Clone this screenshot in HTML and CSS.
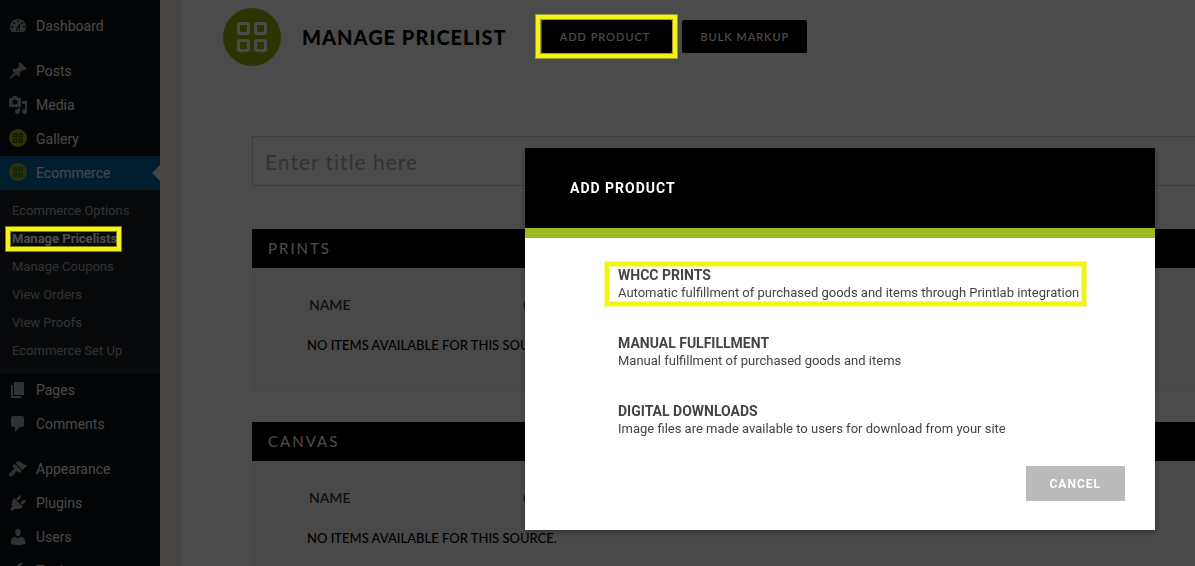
FILE: index.html
```html
<!DOCTYPE html>
<html lang="en">
<head>
    <meta charset="UTF-8">
    <meta name="viewport" content="width=device-width, initial-scale=1.0">
    <title>Manage Pricelist</title>
    <link rel="stylesheet" href="styles.css">
</head>
<body>
    <svg class="symbols" width="0" height="0" aria-hidden="true">
        <symbol id="grid-badge" viewBox="0 0 58 58">
            <circle class="badge-disc" cx="29" cy="29" r="29"/>
            <g fill="none" stroke="currentColor" stroke-width="3">
                <rect x="15.500" y="15.500" width="10" height="10" rx="1.500"/>
                <rect x="32.500" y="15.500" width="10" height="10" rx="1.500"/>
                <rect x="15.500" y="32.500" width="10" height="10" rx="1.500"/>
                <rect x="32.500" y="32.500" width="10" height="10" rx="1.500"/>
            </g>
        </symbol>
        <symbol id="grid-small" viewBox="0 0 18 18">
            <circle class="badge-disc" cx="9" cy="9" r="9"/>
            <g fill="none" stroke="currentColor" stroke-width="1.400">
                <rect x="4.700" y="4.700" width="3.200" height="3.200" rx="1"/>
                <rect x="10.100" y="4.700" width="3.200" height="3.200" rx="1"/>
                <rect x="4.700" y="10.100" width="3.200" height="3.200" rx="1"/>
                <rect x="10.100" y="10.100" width="3.200" height="3.200" rx="1"/>
            </g>
        </symbol>
    </svg>

    <div class="page">
        <nav class="sidebar">
            <ul class="menu">
                <li><a href="#"><svg viewBox="0 0 20 20"><path d="M3.760 16h12.480c1.100-1.370 1.760-3.110 1.760-5 0-4.420-3.580-8-8-8s-8 3.580-8 8c0 1.890.660 3.630 1.760 5zM10 4c.550 0 1 .450 1 1s-.450 1-1 1-1-.450-1-1 .450-1 1-1zM6 6c.550 0 1 .450 1 1s-.450 1-1 1-1-.450-1-1 .450-1 1-1zm8 0c.550 0 1 .450 1 1s-.450 1-1 1-1-.450-1-1 .450-1 1-1zm-5.370 5.550L12 7v6c0 1.100-.900 2-2 2s-2-.900-2-2c0-.570.240-1.080.630-1.450zM4 10c.550 0 1 .450 1 1s-.450 1-1 1-1-.450-1-1 .450-1 1-1zm12 0c.550 0 1 .450 1 1s-.450 1-1 1-1-.450-1-1 .450-1 1-1zm-5 3c0-.550-.450-1-1-1s-1 .450-1 1 .450 1 1 1 1-.450 1-1z"/></svg>Dashboard</a></li>
                <li class="group"><a href="#"><svg viewBox="0 0 20 20"><path d="M10.440 3.020l1.820-1.820 6.360 6.350-1.830 1.820c-1.050-.680-2.480-.570-3.410.360l-.750.750c-.920.930-1.040 2.350-.350 3.410l-1.830 1.820-2.410-2.410-2.800 2.790c-.420.420-3.380 2.710-3.800 2.290s1.860-3.390 2.280-3.810l2.790-2.790L4.100 9.360l1.830-1.820c1.050.690 2.480.570 3.400-.360l.750-.750c.930-.920 1.050-2.350.360-3.410z"/></svg>Posts</a></li>
                <li><a href="#"><svg viewBox="0 0 20 20"><path d="M13 11V4c0-.550-.450-1-1-1h-1.670L9 1H5L3.670 3H2c-.550 0-1 .450-1 1v7c0 .550.450 1 1 1h10c.550 0 1-.450 1-1zM7 4.500c1.380 0 2.500 1.120 2.500 2.500S8.380 9.500 7 9.500 4.500 8.380 4.500 7 5.620 4.500 7 4.500zM14 6h5v10.500c0 1.380-1.120 2.500-2.500 2.500S14 17.880 14 16.500s1.120-2.500 2.500-2.500c.170 0 .340.020.500.050V9h-3V6zm-4 8.050V13h2v3.500c0 1.380-1.120 2.500-2.500 2.500S7 17.880 7 16.500 8.120 14 9.500 14c.170 0 .340.020.500.050z"/></svg>Media</a></li>
                <li><a href="#"><svg class="brand"><use href="#grid-small"/></svg>Gallery</a></li>
                <li class="current"><a href="#"><svg class="brand"><use href="#grid-small"/></svg>Ecommerce</a></li>
            </ul>
            <ul class="submenu">
                <li><a href="#">Ecommerce Options</a></li>
                <li><a class="active highlight" href="#">Manage Pricelists</a></li>
                <li><a href="#">Manage Coupons</a></li>
                <li><a href="#">View Orders</a></li>
                <li><a href="#">View Proofs</a></li>
                <li><a href="#">Ecommerce Set Up</a></li>
            </ul>
            <ul class="menu">
                <li><a href="#"><svg viewBox="0 0 20 20"><path d="M6 15V2h10v13H6zm-1 1h8v2H3V5h2v11z"/></svg>Pages</a></li>
                <li><a href="#"><svg viewBox="0 0 20 20"><path d="M5 2h9c1.100 0 2 .900 2 2v7c0 1.100-.900 2-2 2h-2l-5 5v-5H5c-1.100 0-2-.900-2-2V4c0-1.100.900-2 2-2z"/></svg>Comments</a></li>
                <li class="group"><a href="#"><svg viewBox="0 0 20 20"><path d="M14.480 11.060L7.410 3.990l1.500-1.500c.500-.560 2.300-.470 3.510.320 1.210.800 1.430 1.280 2.910 2.100 1.180.640 2.450 1.260 4.450.850zm-.710.710L6.700 4.700 4.930 6.470c-.390.390-.390 1.020 0 1.410l1.060 1.060c.390.390.390 1.030 0 1.420-.600.600-1.430 1.110-2.210 1.690-.350.260-.700.530-1.010.840C1.430 14.230.400 16.080 1.400 17.070c.990 1 2.840-.030 4.180-1.360.310-.310.580-.660.850-1.020.570-.780 1.080-1.610 1.690-2.210.390-.390 1.020-.390 1.410 0l1.060 1.060c.390.390 1.020.390 1.410 0z"/></svg>Appearance</a></li>
                <li><a href="#"><svg viewBox="0 0 20 20"><path d="M13.110 4.360L9.870 7.600 8 5.730l3.240-3.240c.350-.340 1.050-.200 1.560.320.520.510.660 1.210.310 1.550zm-8 1.770l.910-1.120 9.010 9.010-1.190.840c-.710.710-2.630 1.160-3.820 1.160H6.140L4.900 17.260c-.590.590-1.540.590-2.120 0-.590-.580-.590-1.530 0-2.120l1.240-1.240v-3.880c0-1.130.400-3.190 1.090-3.890zm7.260 3.970l3.240-3.240c.340-.350 1.040-.210 1.550.310.520.510.660 1.210.310 1.550l-3.240 3.250z"/></svg>Plugins</a></li>
                <li><a href="#"><svg viewBox="0 0 20 20"><path d="M10 9.250c-2.270 0-2.730-3.440-2.730-3.440C7 4.020 7.820 2 9.970 2c2.160 0 2.980 2.020 2.710 3.810 0 0-.410 3.440-2.680 3.440zm0 2.570L12.720 10c2.390 0 4.520 2.330 4.520 4.530v2.490s-3.650 1.130-7.240 1.130c-3.650 0-7.240-1.130-7.240-1.130v-2.490c0-2.250 1.940-4.480 4.470-4.480z"/></svg>Users</a></li>
                <li><a href="#"><svg viewBox="0 0 20 20"><path d="M16.680 9.770c-1.340 1.340-3.300 1.670-4.950.990l-5.410 6.520c-.990.990-2.590.990-3.580 0s-.990-2.590 0-3.570l6.520-5.420c-.680-1.650-.350-3.610.990-4.950 1.280-1.280 3.120-1.620 4.720-1.060l-2.890 2.890 2.820 2.820 2.860-2.870c.530 1.580.180 3.390-1.080 4.650z"/></svg>Tools</a></li>
            </ul>
        </nav>

        <main class="content">
            <header class="page-header">
                <svg class="page-icon"><use href="#grid-badge"/></svg>
                <h1>Manage Pricelist</h1>
                <div class="actions">
                    <span class="highlight"><button class="add" type="button">Add Product</button></span>
                    <button type="button">Bulk Markup</button>
                </div>
            </header>

            <form class="pricelist">
                <input class="title-input" type="text" placeholder="Enter title here" aria-label="Pricelist title">

                <section class="panel">
                    <h2>Prints</h2>
                    <table>
                        <thead>
                            <tr><th class="name">Name</th><th>Cost</th></tr>
                        </thead>
                        <tbody>
                            <tr><td colspan="2">No items available for this source.</td></tr>
                        </tbody>
                    </table>
                </section>

                <section class="panel">
                    <h2>Canvas</h2>
                    <table>
                        <thead>
                            <tr><th class="name">Name</th><th>Cost</th></tr>
                        </thead>
                        <tbody>
                            <tr><td colspan="2">No items available for this source.</td></tr>
                        </tbody>
                    </table>
                </section>
            </form>
        </main>
    </div>

    <div class="overlay">
        <div class="modal" role="dialog" aria-labelledby="modal-title">
            <h2 id="modal-title">Add Product</h2>
            <ul class="options">
                <li>
                    <a class="highlight" href="#"><strong>WHCC Prints</strong>Automatic fulfillment of purchased goods and items through Printlab integration</a>
                </li>
                <li>
                    <a href="#"><strong>Manual Fulfillment</strong>Manual fulfillment of purchased goods and items</a>
                </li>
                <li>
                    <a href="#"><strong>Digital Downloads</strong>Image files are made available to users for download from your site</a>
                </li>
            </ul>
            <div class="modal-footer">
                <button type="button">Cancel</button>
            </div>
        </div>
    </div>
</body>
</html>
```

FILE: styles.css
```css
* {
    box-sizing: border-box;
}
body {
    margin: 0;
    height: 100vh;
    overflow: hidden;
    background-color: #eeebdf;
    font-family: Roboto, sans-serif;
    color: #000;
}
ul {
    list-style: none;
    margin: 0;
    padding: 0;
}
a {
    color: inherit;
    text-decoration: none;
}
button {
    border: none;
    font-family: inherit;
    text-transform: uppercase;
    cursor: pointer;
}
.symbols {
    position: absolute;
}
.badge-disc {
    fill: #98b00c;
}
.page {
    display: flex;
    min-height: 100vh;
}

/* Sidebar */
.sidebar {
    flex: 0 0 160px;
    padding-top: 9px;
    background-color: #0b0e11;
    color: #eee;
}
.menu {
    font-size: 14px;
    line-height: 34px;
}
.menu .group {
    margin-top: 11px;
}
.menu a {
    display: flex;
    align-items: center;
    gap: 8px;
    height: 34px;
    padding-left: 8px;
}
.menu svg {
    width: 20px;
    height: 20px;
    fill: #a0a5aa;
}
.menu .brand {
    width: 18px;
    height: 18px;
    margin: 0 1px 2px;
    color: #3a4800;
}
.current {
    position: relative;
    background-color: #0067a0;
}
.menu .current .brand {
    color: #2a6a50;
}
.current::after {
    content: "";
    position: absolute;
    top: 9px;
    right: 0;
    border: 8px solid transparent;
    border-left-width: 0;
    border-right-color: #eeebdf;
}
.submenu {
    padding: 7px 12px 8px;
    background-color: #1c2024;
    color: #a5a8ab;
    font-size: 13px;
    line-height: 28px;
}
.submenu a {
    display: block;
    width: max-content;
}
.submenu .active {
    color: #fff;
    font-weight: bold;
}

/* Page content */
.content {
    flex: 1;
    min-width: 0;
    margin-left: 15px;
    padding: 8px 0 0 70px;
    border-left: 7px solid #e4e4e4;
    background-color: #fafafa;
    font-family: Lato, sans-serif;
}
.page-header {
    display: flex;
    align-items: center;
    height: 58px;
    margin-left: -29px;
}
.page-icon {
    width: 58px;
    height: 58px;
    color: #fafafa;
}
h1 {
    margin: 0 35px 0 21px;
    font-size: 20px;
    font-weight: 900;
    letter-spacing: 1px;
    text-transform: uppercase;
    white-space: nowrap;
}
.actions {
    display: flex;
    gap: 10px;
    padding-bottom: 1px;
}
.actions button {
    height: 33px;
    padding: 0 18px;
    border-radius: 2px;
    background-color: #000;
    color: #fff;
    font-size: 11px;
    font-weight: 500;
    letter-spacing: 1px;
}
.actions .add {
    padding-right: 22px;
}
.title-input {
    display: block;
    width: 100%;
    height: 50px;
    margin-top: 70px;
    padding: 0 12px;
    border: 1px solid #ccc;
    border-right: none;
    background-color: #fafafa;
    font-family: inherit;
    font-size: 21px;
    letter-spacing: 1px;
}
.title-input::placeholder {
    color: #a9a9a9;
}
.panel {
    margin-top: 43px;
    border-left: 1px solid #eaeaea;
    border-bottom: 1px solid #eaeaea;
    background-color: #f4f4f4;
}
.panel + .panel {
    margin-top: 30px;
}
.panel h2 {
    margin: 0 0 0 -1px;
    padding: 0 16px;
    background-color: #000;
    color: #fff;
    font-size: 15px;
    font-weight: 400;
    letter-spacing: 2px;
    line-height: 39px;
    text-transform: uppercase;
}
.panel table {
    width: 100%;
    padding: 17px 0 26px 54px;
    border-spacing: 0;
    font-size: 14px;
    line-height: 40px;
    text-transform: uppercase;
}
.panel th,
.panel td {
    padding: 0;
    text-align: left;
}
.panel th {
    padding-left: 2px;
    color: #32373c;
    font-weight: 600;
}
.panel td {
    font-size: 13px;
    font-weight: 500;
}
.panel .name {
    width: 214px;
}

/* Modal */
.overlay {
    position: fixed;
    inset: 0;
    z-index: 10;
    display: flex;
    align-items: flex-start;
    justify-content: flex-end;
    padding: 148px 40px 36px;
    background-color: rgba(0, 0, 0, 0.7);
}
.modal {
    width: 630px;
    background-color: #fff;
    box-shadow: 0 3px 6px rgba(0, 0, 0, 0.3);
}
.modal h2 {
    margin: 0;
    padding: 0 45px;
    border-bottom: 10px solid #9dbb1c;
    background-color: #000;
    color: #fff;
    font-size: 14px;
    font-weight: bold;
    letter-spacing: 1px;
    line-height: 80px;
    text-transform: uppercase;
}
.options {
    display: grid;
    gap: 32px;
    padding: 28px 0 0 93px;
    color: #444;
    font-size: 13px;
    line-height: 18px;
}
.options a {
    display: block;
    width: max-content;
}
.options strong {
    display: block;
    font-size: 14px;
    text-transform: uppercase;
}
.modal-footer {
    display: flex;
    justify-content: flex-end;
    padding: 28px 30px 29px;
}
.modal-footer button {
    height: 35px;
    padding: 0 24px;
    background-color: #bbb;
    color: #fff;
    font-size: 12px;
    font-weight: bold;
    letter-spacing: 1px;
}

/* Yellow marker frames, kept above the dark overlay */
.highlight {
    position: relative;
}
.highlight::after {
    content: "";
    position: absolute;
    inset: -5px -5px -5px -6px;
    z-index: 20;
    border: 4px solid #f3f318;
    box-shadow: 0 0 0 1px rgba(243, 243, 24, 0.5), inset 0 0 0 1px rgba(243, 243, 24, 0.5);
    pointer-events: none;
}
.submenu .highlight::after {
    inset: 2px -4px 2px -6px;
}
.options .highlight::after {
    inset: -4px -7px -4px -13px;
}
```
